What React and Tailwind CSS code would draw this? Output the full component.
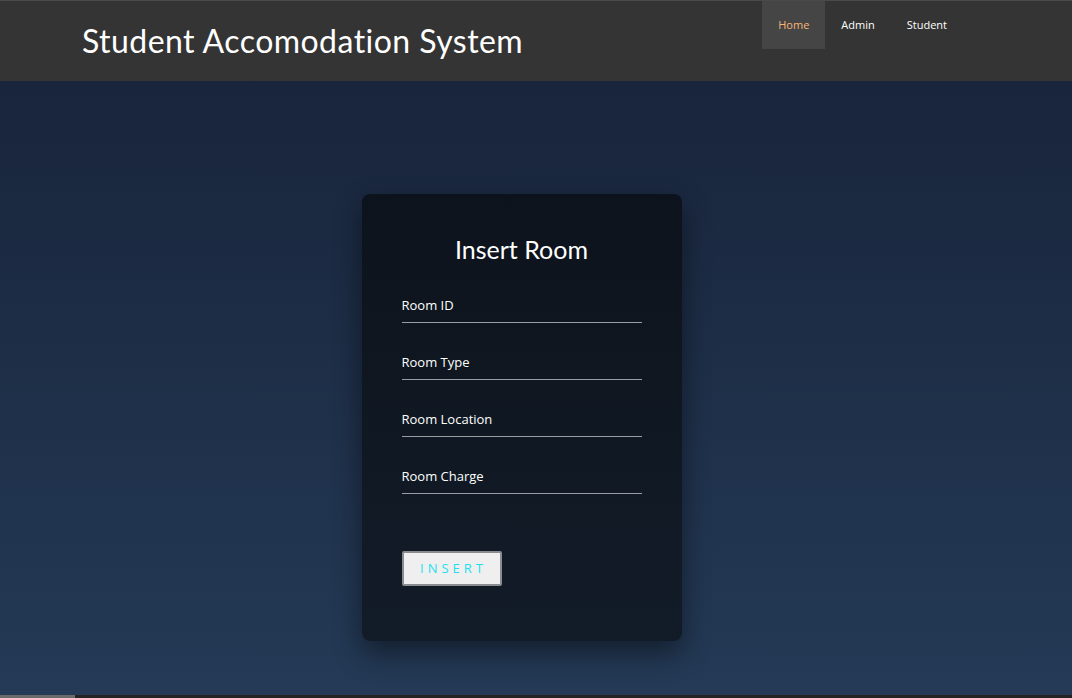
import React from 'react'

const fields = ['Room ID', 'Room Type', 'Room Location', 'Room Charge']

function App() {
  return (
    <div className="h-[698px] w-[1072px] overflow-hidden flex flex-col bg-gradient-to-b from-[#172238] to-[#243a56]" style={{ fontFamily: 'Lato, "Open Sans", sans-serif' }}>
      <header className="h-[81px] shrink-0 bg-[#343434] border-t border-[#4a4a4a] flex justify-between">
        <h1 className="pl-[82px] pt-[22px] text-[32px] leading-[36px] text-white tracking-[0.45px]" style={{ fontFamily: 'Lato, sans-serif' }}>
          Student Accomodation System
        </h1>
        <nav className="flex items-start pr-[109px] text-[11px]" style={{ fontFamily: '"Open Sans", sans-serif' }}>
          <a className="h-[48px] px-4 flex items-center bg-[#454545] text-[#f5b575]">Home</a>
          <a className="h-[48px] px-4 flex items-center text-white">Admin</a>
          <a className="h-[48px] px-4 flex items-center text-white">Student</a>
        </nav>
      </header>

      <main className="flex-1 flex justify-center pr-[29px] pt-[113px]">
        <section className="w-[320px] h-[447px] rounded-lg bg-gradient-to-b from-[#0d131c] to-[#121c28] shadow-[0_12px_28px_rgba(0,0,0,0.45)] px-10 pt-[36px]">
          <h2 className="text-center text-white text-[25px] leading-[38px]" style={{ fontFamily: 'Lato, sans-serif' }}>
            Insert Room
          </h2>
          <div className="mt-[17px] flex flex-col gap-[19px]">
            {fields.map((f) => (
              <div key={f} className="h-[38px] border-b border-[#9a9ea4] flex items-end pb-[7px]">
                <span className="text-white text-[13px]" style={{ fontFamily: '"Open Sans", sans-serif' }}>{f}</span>
              </div>
            ))}
          </div>
          <button className="mt-[57px] w-[100px] h-[35px] bg-[#efefef] border-2 border-[#8a8d90] rounded-[2px] text-[#22e0f0] text-[13px] tracking-[4px] pl-[4px]" style={{ fontFamily: '"Open Sans", sans-serif' }}>
            INSERT
          </button>
        </section>
      </main>

      <div className="h-[3px] shrink-0 bg-[#232323] flex">
        <div className="w-[75px] bg-[#6a6a6a]" />
      </div>
    </div>
  )
}

export default App
